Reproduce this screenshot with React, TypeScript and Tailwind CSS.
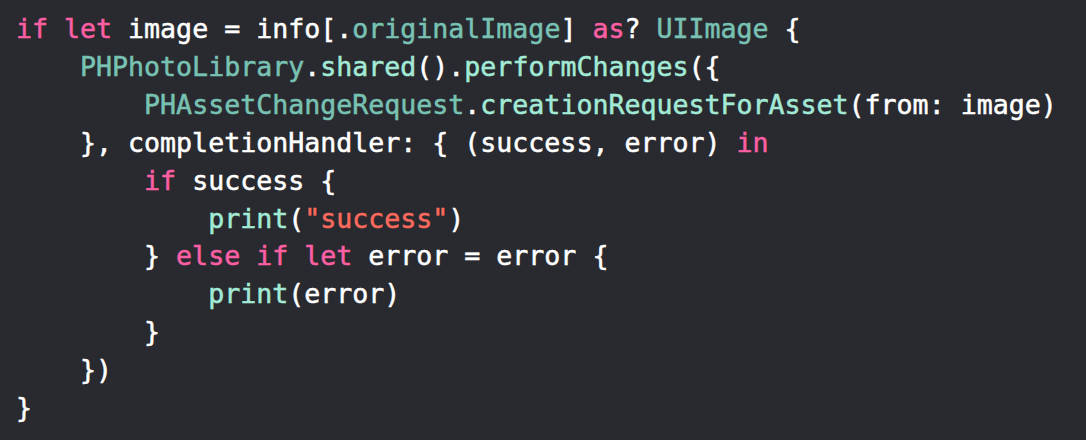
import React from "react";

type Tok = [string, string];

const K = "text-[#fc5fa3]";
const P = "text-[#ffffff]";
const T = "text-[#78c2b3]";
const F = "text-[#a3ead6]";
const S = "text-[#fc6a5d]";

const lines: Tok[][] = [
  [[K, "if let"], [P, " image = info[."], [T, "originalImage"], [P, "] "], [K, "as"], [P, "? "], [T, "UIImage"], [P, " {"]],
  [[P, "    "], [T, "PHPhotoLibrary"], [P, "."], [F, "shared"], [P, "()."], [F, "performChanges"], [P, "({"]],
  [[P, "        "], [T, "PHAssetChangeRequest"], [P, "."], [F, "creationRequestForAsset"], [P, "(from: image)"]],
  [[P, "    }, completionHandler: { (success, error) "], [K, "in"]],
  [[P, "        "], [K, "if"], [P, " success {"]],
  [[P, "            "], [F, "print"], [P, "("], [S, "\"success\""], [P, ")"]],
  [[P, "        } "], [K, "else if let"], [P, " error = error {"]],
  [[P, "            "], [F, "print"], [P, "(error)"]],
  [[P, "        }"]],
  [[P, "    })"]],
  [[P, "}"]],
];

export default function App() {
  return (
    <div className="w-[1086px] h-[440px] bg-[#292a30] overflow-hidden pl-[16px] pt-[10px]">
      <pre
        className="m-0 text-[26.6px] leading-[37.9px] whitespace-pre [-webkit-text-stroke-width:0.5px]"
        style={{ fontFamily: '"DejaVu Sans Mono", "Liberation Mono", monospace' }}
      >
        {lines.map((l, i) => (
          <div key={i}>
            {l.map(([c, t], j) => (
              <span key={j} className={c}>
                {t}
              </span>
            ))}
          </div>
        ))}
      </pre>
    </div>
  );
}
